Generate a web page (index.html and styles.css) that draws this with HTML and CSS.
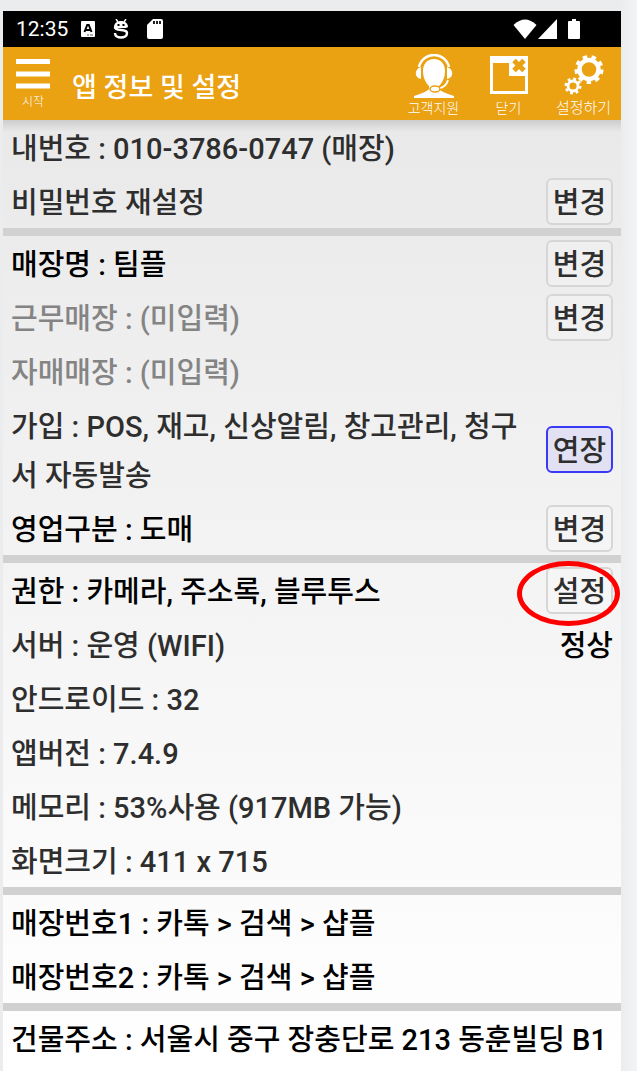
FILE: index.html
```
<!DOCTYPE html>
<html lang="ko">
<head>
    <meta charset="UTF-8">
    <meta name="viewport" content="width=device-width, initial-scale=1.0">
    <title>앱 정보 및 설정</title>
    <link rel="stylesheet" href="styles.css">
</head>
<body>
    <div class="screen">
        <div class="status-bar">
            <span class="clock">12:35</span>
            <svg class="status-a" width="16" height="16" viewBox="0 0 16 16">
                <rect x="1" y="0" width="14" height="16" rx="1" fill="#fff"/>
                <path d="M4.500 11 L7.200 4 H8.800 L11.500 11 M5.500 9 H10.500" fill="none" stroke="#000" stroke-width="2"/>
                <path d="M7 14 H9 M10 14 H13" stroke="#555" stroke-width="1"/>
            </svg>
            <svg class="status-s" width="16" height="20" viewBox="0 0 16 20">
                <path d="M1 8 C1 0 15 0 15 8 L13 9 H3 Z" fill="#fff"/>
                <path d="M3 0 L5 3 M13 0 L11 3" stroke="#fff" stroke-width="1.500"/>
                <path d="M4.500 6 H6.500 M9.500 6 H11.500" stroke="#000" stroke-width="2"/>
                <path d="M2 8 C2 13 14 9 14 14 C14 20 2 20 2 14" fill="none" stroke="#fff" stroke-width="2.500"/>
            </svg>
            <svg class="status-sd" width="16" height="20" viewBox="0 0 16 20">
                <path d="M6 0 H14 Q16 0 16 2 V18 Q16 20 14 20 H2 Q0 20 0 18 V6 Z" fill="#fff"/>
                <path d="M7 2 V5 M10 2 V5 M13 2 V5" stroke="#222" stroke-width="2"/>
            </svg>
            <span class="status-right">
                <svg width="24" height="20" viewBox="0 0 24 20">
                    <path d="M0.500 6 Q12 -5 23.500 6 L12 20 Z" fill="#fff"/>
                </svg>
                <svg width="20" height="20" viewBox="0 0 20 20">
                    <path d="M0 20 L19 0 V20 Z" fill="#fff"/>
                </svg>
                <svg class="battery" width="12" height="20" viewBox="0 0 12 20">
                    <path d="M4 0 H8 V2 H11 Q12 2 12 3 V19 Q12 20 11 20 H1 Q0 20 0 19 V3 Q0 2 1 2 H4 Z" fill="#fff"/>
                </svg>
            </span>
        </div>

        <header class="header">
            <button type="button" class="menu-btn">
                <svg width="34" height="32" viewBox="0 0 34 32">
                    <path d="M0 3.500 H34 M0 16 H34 M0 28 H34" stroke="#fff" stroke-width="5"/>
                </svg>
                <span>시작</span>
            </button>
            <h1>앱 정보 및 설정</h1>
            <nav class="tools">
                <button type="button" class="tool">
                    <svg width="42" height="44" viewBox="0 0 42 44">
                        <path d="M21 5 C28 5 32 10 32 17 C32 24 29 29 26 32 V35 Q28 38 41 42 V44 H1 V42 Q14 38 16 35 V32 C13 29 10 24 10 17 C10 10 14 5 21 5 Z" fill="#fff"/>
                        <path d="M6 13 C10 -3 32 -3 36 13" fill="none" stroke="#fff" stroke-width="2.500"/>
                        <path d="M8 13 V25 C1 24 1 15 8 13 Z M34 13 V25 C41 24 41 15 34 13 Z" fill="#fff"/>
                        <path d="M35 26 Q33 33 26 34.500" fill="none" stroke="#fff" stroke-width="2"/>
                        <ellipse cx="22" cy="35" rx="5" ry="3" fill="#fff" stroke="#eaa112" stroke-width="1.500"/>
                    </svg>
                    <span>고객지원</span>
                </button>
                <button type="button" class="tool">
                    <svg width="38" height="40" viewBox="0 0 38 40">
                        <path d="M0 2 H38 V40 H0 Z M3 9 V37 H35 V22 H19 V9 Z" fill="#fff" fill-rule="evenodd"/>
                        <path d="M24 6.500 L34 16.500 M34 6.500 L24 16.500" stroke="#eaa112" stroke-width="5"/>
                    </svg>
                    <span>닫기</span>
                </button>
                <button type="button" class="tool tool-wide">
                    <svg width="40" height="41" viewBox="0 0 40 41">
                        <circle cx="25" cy="15.500" r="9.500" fill="none" stroke="#fff" stroke-width="4.500"/>
                        <circle cx="25" cy="15.500" r="12.500" fill="none" stroke="#fff" stroke-width="4" stroke-dasharray="4.400 4.327"/>
                        <circle cx="9" cy="32" r="5" fill="none" stroke="#fff" stroke-width="2.800"/>
                        <circle cx="9" cy="32" r="7" fill="none" stroke="#fff" stroke-width="3" stroke-dasharray="2.750 2.748"/>
                    </svg>
                    <span>설정하기</span>
                </button>
            </nav>
        </header>

        <main class="content">
            <section>
                <div class="row"><p>내번호 : 010-3786-0747 (매장)</p></div>
                <div class="row"><p>비밀번호 재설정</p><button type="button" class="btn">변경</button></div>
            </section>
            <section>
                <div class="row strong"><p>매장명 : 팀플</p><button type="button" class="btn">변경</button></div>
                <div class="row muted"><p>근무매장 : (미입력)</p><button type="button" class="btn">변경</button></div>
                <div class="row muted"><p>자매매장 : (미입력)</p></div>
                <div class="row"><p>가입 : POS, 재고, 신상알림, 창고관리, 청구서 자동발송</p><button type="button" class="btn btn-blue">연장</button></div>
                <div class="row strong"><p>영업구분 : 도매</p><button type="button" class="btn">변경</button></div>
            </section>
            <section>
                <div class="row strong">
                    <p>권한 : 카메라, 주소록, 블루투스</p>
                    <div class="marked">
                        <button type="button" class="btn">설정</button>
                        <span class="circle"></span>
                    </div>
                </div>
                <div class="row"><p>서버 : 운영 (WIFI)</p><p class="state">정상</p></div>
                <div class="row"><p>안드로이드 : 32</p></div>
                <div class="row"><p>앱버전 : 7.4.9</p></div>
                <div class="row"><p>메모리 : 53%사용 (917MB 가능)</p></div>
                <div class="row"><p>화면크기 : 411 x 715</p></div>
            </section>
            <section>
                <div class="row strong"><p>매장번호1 : 카톡 &gt; 검색 &gt; 샵플</p></div>
                <div class="row strong"><p>매장번호2 : 카톡 &gt; 검색 &gt; 샵플</p></div>
            </section>
            <section>
                <div class="row strong"><p>건물주소 : 서울시 중구 장충단로 213 동훈빌딩 B1</p></div>
            </section>
        </main>
    </div>
</body>
</html>
```
FILE: styles.css
```
* {
    box-sizing: border-box;
}

body {
    margin: 0;
    padding: 11px 16px 0 3px;
    min-height: 100vh;
    display: flex;
    background: linear-gradient(to left, #f3f4f7, #ebecee 16px);
    color: #2e2e2e;
    font-family: Roboto, 'Noto Sans CJK KR', sans-serif;
    font-weight: 500;
}

.screen {
    flex: 1;
    display: flex;
    flex-direction: column;
    min-width: 0;
}

.status-bar {
    display: flex;
    align-items: center;
    height: 36px;
    padding: 0 41px 0 13px;
    background: #000;
    color: #fff;
}

.clock {
    font-size: 21px;
    font-weight: 400;
}

.status-a {
    margin-left: 12px;
}

.status-s {
    margin-left: 17px;
}

.status-sd {
    margin-left: 18px;
}

.status-right {
    display: flex;
    gap: 1px;
    margin-left: auto;
}

.battery {
    margin-left: 9px;
}

.header {
    display: flex;
    height: 73px;
    padding-left: 13px;
    background: #eaa112;
    color: #fff;
}

.header button {
    display: flex;
    flex-direction: column;
    align-items: center;
    padding: 0;
    border: 0;
    background: none;
    color: #fff;
    font-family: inherit;
    font-weight: 300;
    cursor: pointer;
}

.header .menu-btn {
    padding-top: 11px;
    font-size: 12px;
    line-height: 24px;
}

h1 {
    margin: 0 0 0 22px;
    padding-top: 9px;
    font-size: 27px;
    font-weight: 500;
    line-height: 64px;
    white-space: nowrap;
}

.tools {
    display: flex;
    margin-left: auto;
}

.header .tool {
    justify-content: space-between;
    width: 75px;
    padding: 7px 0 2px;
    font-size: 14px;
    line-height: 20px;
}

.header .tool-wide {
    font-size: 15px;
}

.content {
    flex: 1;
    background:
        linear-gradient(rgba(0, 0, 0, 0.12), rgba(0, 0, 0, 0)) top / 100% 12px no-repeat,
        linear-gradient(#e9e9e9, #fff);
}

section + section {
    border-top: 8px solid #d1d1d1;
}

.row {
    display: flex;
    align-items: center;
    justify-content: space-between;
    gap: 16px;
    padding: 0 8px;
    font-size: 29px;
    line-height: 49px;
}

.row p {
    margin: 0;
    padding-top: 5px;
    word-break: break-all;
}

.strong,
.row .state {
    color: #000;
}

.muted {
    color: #848484;
}

.btn {
    flex: none;
    width: 67px;
    height: 47px;
    padding: 4px 0 0;
    border: 2px solid #d6d6d6;
    border-radius: 6px;
    background: rgba(255, 255, 255, 0.2);
    color: #2e2e2e;
    font: inherit;
    line-height: 39px;
    cursor: pointer;
}

.btn-blue {
    border-color: #3838f5;
    background: #e1e1f3;
}

.marked {
    display: flex;
    position: relative;
}

/* red ring around the permission button */
.circle {
    position: absolute;
    top: -6px;
    right: -7px;
    width: 103px;
    height: 65px;
    border: 5px solid #f00;
    border-radius: 50%;
    pointer-events: none;
}
```
